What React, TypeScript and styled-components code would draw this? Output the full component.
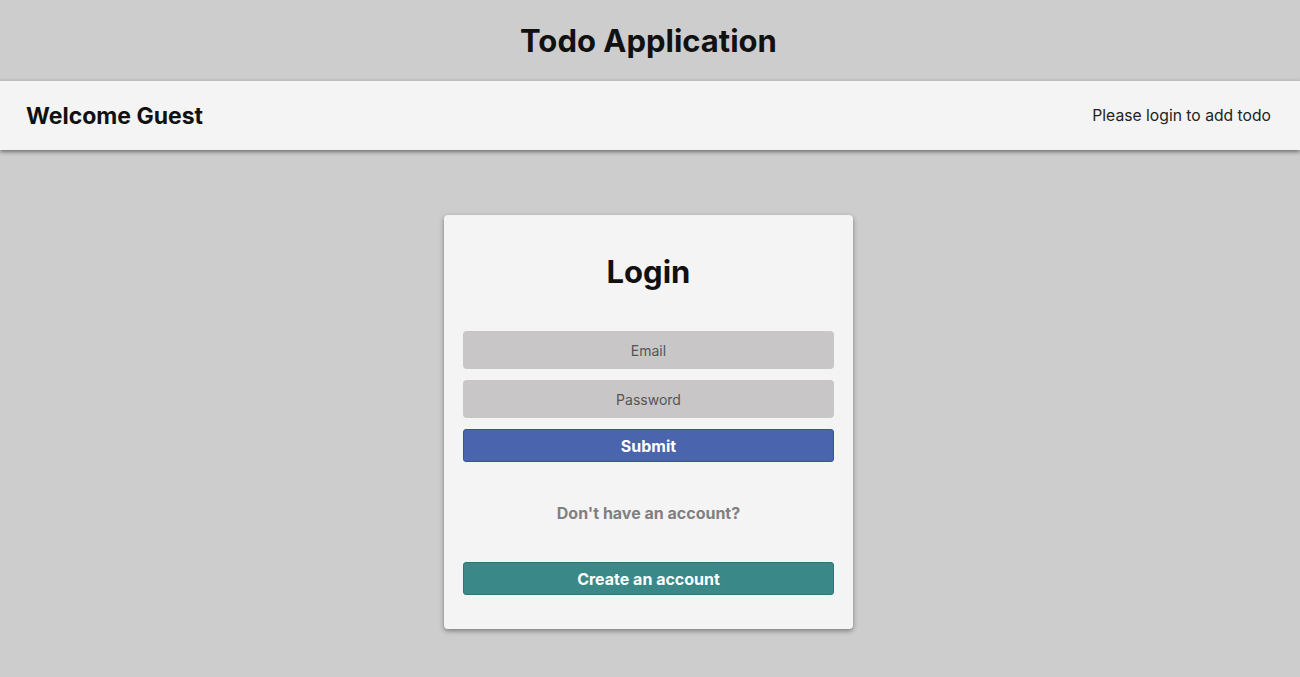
import React, { useState } from 'react';
import styled, { createGlobalStyle } from 'styled-components';

const GlobalStyle = createGlobalStyle`
  html, body {
    margin: 0;
    padding: 0;
    background-color: #cdcdcd;
    font-family: 'Inter', 'Liberation Sans', sans-serif;
    color: #111111;
  }
  * { box-sizing: border-box; }
`;

const Page = styled.div`
  min-height: 677px;
  background-color: #cdcdcd;
`;

// 상단 제목
const TitleBar = styled.header`
  height: 80px;
  display: flex;
  justify-content: center;
  align-items: center;
  padding-right: 3px;
`;

const AppTitle = styled.h1`
  margin: 0;
  font-size: 31px;
  font-weight: 700;
`;

// 환영 바
const WelcomeBar = styled.div`
  height: 70px;
  background-color: #f4f4f4;
  border-top: 1px solid #bdbdbd;
  box-shadow: 0px 2px 4px rgba(0, 0, 0, 0.45);
  display: flex;
  justify-content: space-between;
  align-items: center;
  padding: 0 29px 0 26px;
`;

const WelcomeText = styled.h2`
  margin: 0;
  font-size: 23px;
  font-weight: 700;
`;

const InfoText = styled.span`
  font-size: 15.7px;
  color: #222222;
`;

const Main = styled.main`
  display: flex;
  justify-content: center;
  padding-top: 65px;
  padding-right: 3px;
`;

// 로그인 카드
const Card = styled.div`
  width: 409px;
  background-color: #f4f4f4;
  border-radius: 4px;
  box-shadow: 0px 2px 5px rgba(0, 0, 0, 0.4);
  padding: 31px 19px 34px;
  display: flex;
  flex-direction: column;
`;

const CardTitle = styled.h2`
  margin: 0 0 33px;
  text-align: center;
  font-size: 31px;
  font-weight: 700;
  line-height: 52px;
`;

const Form = styled.form`
  display: flex;
  flex-direction: column;
  gap: 11px;
`;

const Input = styled.input`
  width: 100%;
  height: 38px;
  border: none;
  border-radius: 4px;
  background-color: #c8c6c7;
  text-align: center;
  font-family: 'Inter', 'Liberation Sans', sans-serif;
  font-size: 14px;
  color: #333333;
  outline: none;

  &::placeholder {
    color: #555555;
  }
`;

const Button = styled.button<{ $color: string; $border: string }>`
  width: 100%;
  height: 33px;
  border: 1px solid ${p => p.$border};
  border-radius: 3px;
  background-color: ${p => p.$color};
  color: #ffffff;
  font-family: 'Inter', 'Liberation Sans', sans-serif;
  font-size: 16px;
  font-weight: 700;
  cursor: pointer;
`;

const AccountText = styled.p`
  margin: 40px 0 38px;
  text-align: center;
  font-size: 16px;
  font-weight: 700;
  color: #808080;
  line-height: 22px;
`;

function App() {
  const [email, setEmail] = useState('');
  const [password, setPassword] = useState('');

  return (
    <Page>
      <GlobalStyle />
      <TitleBar>
        <AppTitle>Todo Application</AppTitle>
      </TitleBar>
      <WelcomeBar>
        <WelcomeText>Welcome Guest</WelcomeText>
        <InfoText>Please login to add todo</InfoText>
      </WelcomeBar>
      <Main>
        <Card>
          <CardTitle>Login</CardTitle>
          <Form onSubmit={e => e.preventDefault()}>
            <Input
              type="email"
              placeholder="Email"
              value={email}
              onChange={(e: React.ChangeEvent<HTMLInputElement>) => setEmail(e.target.value)}
            />
            <Input
              type="password"
              placeholder="Password"
              value={password}
              onChange={(e: React.ChangeEvent<HTMLInputElement>) => setPassword(e.target.value)}
            />
            <Button type="submit" $color="#4a64ad" $border="#3652a0">Submit</Button>
          </Form>
          <AccountText>Don't have an account?</AccountText>
          <Button type="button" $color="#3a8888" $border="#2c7676">Create an account</Button>
        </Card>
      </Main>
    </Page>
  );
}

export default App;
